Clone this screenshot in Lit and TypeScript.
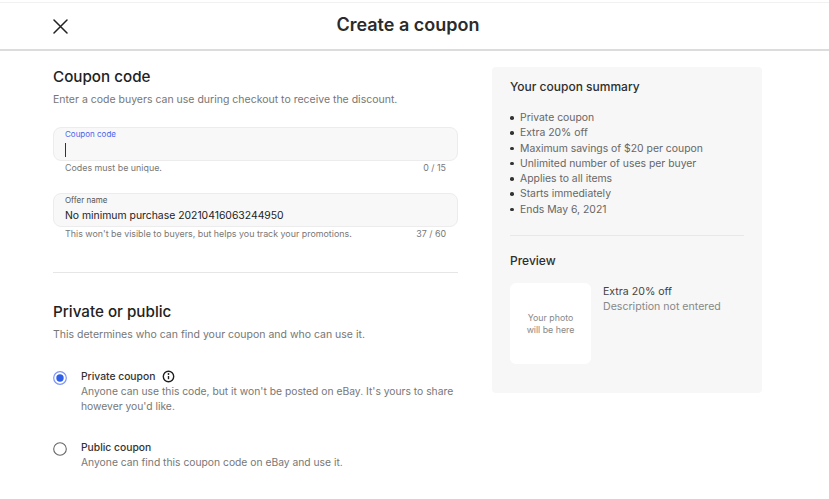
import { LitElement, html, css } from "lit";
import { customElement } from "lit/decorators.js";

@customElement("app-root")
export class AppRoot extends LitElement {
  static styles = css`
    :host { display: block; width: 829px; height: 499px; overflow: hidden; background: #fff; font-family: Inter, "Liberation Sans", sans-serif; color: #2b2b2b; }
    * { box-sizing: border-box; }
    .header { margin-top: 2px; border-top: 1px solid #f1f1f1; border-bottom: 2px solid #dcdcdc; display: flex; align-items: center; position: relative; padding: 0 53px; height: 49px; }
    .close { width: 15px; height: 15px; display: block; margin-top: 1px; }
    .title { position: absolute; left: 0; right: 13px; text-align: center; top: 10px; font-size: 18px; font-weight: 600; line-height: 24px; }
    .body { display: flex; padding: 16px 0 0 53px; gap: 34px; align-items: flex-start; }
    .left { width: 405px; flex: none; }
    h2 { margin: 0; font-size: 15.2px; font-weight: 500; line-height: 20px; color: #222; }
    .sub { margin: 6px 0 0; font-size: 10.5px; line-height: 14px; color: #767676; }
    .field { height: 34px; border: 1px solid #ececec; border-radius: 8px; background: #f8f8f8; padding: 1px 11px; display: flex; flex-direction: column; }
    .flabel { font-size: 8px; line-height: 11px; color: #555; }
    .flabel.active { color: #4a63f0; }
    .fvalue { font-size: 10.4px; line-height: 15px; margin-top: 2px; color: #222; height: 15px; display: flex; align-items: center; }
    .caret { width: 1px; height: 14px; background: #333; }
    .hint { display: flex; justify-content: space-between; padding: 1px 12px 0; font-size: 8.9px; line-height: 12px; color: #777; }
    .first { margin-top: 20px; }
    .second { margin-top: 19px; }
    hr { border: 0; height: 1px; background: #e6e6e6; margin: 32px 0 0; }
    .sec2 { margin-top: 29px; }
    .radios { margin-top: 27px; display: flex; flex-direction: column; gap: 26px; }
    .radio { display: flex; gap: 14px; }
    .dot { width: 14px; height: 14px; margin-top: 2px; flex: none; display: block; }
    .rt { display: flex; align-items: center; gap: 7px; font-size: 10.3px; font-weight: 500; line-height: 15px; color: #333; }
    .rd { font-size: 10.3px; line-height: 15px; color: #777; white-space: nowrap; }
    .info { width: 13px; height: 13px; display: block; }
    .card { width: 270px; flex: none; height: 326px; background: #f7f7f7; border-radius: 4px; padding: 12px 18px; }
    h3 { margin: 0; font-size: 12px; font-weight: 500; line-height: 16px; color: #2e2e2e; }
    ul { margin: 15px 0 0; padding: 0 0 0 10px; list-style: none; font-size: 10.4px; line-height: 15.3px; color: #666; }
    li { position: relative; }
    li::before { content: ""; position: absolute; left: -10px; top: 6px; width: 3.5px; height: 3.5px; border-radius: 50%; background: #333; }
    .card hr { margin: 18px 0 0; background: #e8e8e8; }
    .pv { margin-top: 17px; }
    .prow { display: flex; gap: 12px; margin-top: 14px; }
    .photo { width: 81px; height: 81px; background: #fff; border-radius: 6px; flex: none; display: flex; align-items: center; justify-content: center; text-align: center; font-size: 8.8px; line-height: 12px; color: #888; }
    .pt { font-size: 10.6px; line-height: 15px; color: #444; margin-top: 1px; }
    .pd { font-size: 10.6px; line-height: 15px; color: #888; }
  `;

  render() {
    return html`
      <div class="header">
        <svg class="close" viewBox="0 0 15 15" fill="none" stroke="#222" stroke-width="1.5" stroke-linecap="round"><path d="M1 1l13 13M14 1L1 14"/></svg>
        <div class="title">Create a coupon</div>
      </div>
      <div class="body">
        <div class="left">
          <h2>Coupon code</h2>
          <p class="sub">Enter a code buyers can use during checkout to receive the discount.</p>
          <div class="field first">
            <div class="flabel active">Coupon code</div>
            <div class="fvalue"><span class="caret"></span></div>
          </div>
          <div class="hint"><span>Codes must be unique.</span><span>0 / 15</span></div>
          <div class="field second">
            <div class="flabel">Offer name</div>
            <div class="fvalue">No minimum purchase 20210416063244950</div>
          </div>
          <div class="hint"><span>This won't be visible to buyers, but helps you track your promotions.</span><span>37 / 60</span></div>
          <hr />
          <h2 class="sec2">Private or public</h2>
          <p class="sub">This determines who can find your coupon and who can use it.</p>
          <div class="radios">
            <div class="radio">
              <svg class="dot" viewBox="0 0 14 14"><circle cx="7" cy="7" r="6.3" fill="#fff" stroke="#7f95f5" stroke-width="1.2"/><circle cx="7" cy="7" r="3.7" fill="#2f5fe8"/></svg>
              <div>
                <div class="rt">Private coupon
                  <svg class="info" viewBox="0 0 13 13" fill="none"><circle cx="6.5" cy="6.5" r="5.2" stroke="#1f1f1f" stroke-width="1.4"/><path d="M6.5 6v3.2" stroke="#1f1f1f" stroke-width="1.4"/><circle cx="6.5" cy="4" r=".9" fill="#1f1f1f"/></svg>
                </div>
                <div class="rd">Anyone can use this code, but it won't be posted on eBay. It's yours to share<br />however you'd like.</div>
              </div>
            </div>
            <div class="radio">
              <svg class="dot" viewBox="0 0 14 14"><circle cx="7" cy="7" r="6.3" fill="#fff" stroke="#666" stroke-width="1.1"/></svg>
              <div>
                <div class="rt">Public coupon</div>
                <div class="rd">Anyone can find this coupon code on eBay and use it.</div>
              </div>
            </div>
          </div>
        </div>
        <div class="card">
          <h3>Your coupon summary</h3>
          <ul>
            <li>Private coupon</li>
            <li>Extra 20% off</li>
            <li>Maximum savings of $20 per coupon</li>
            <li>Unlimited number of uses per buyer</li>
            <li>Applies to all items</li>
            <li>Starts immediately</li>
            <li>Ends May 6, 2021</li>
          </ul>
          <hr />
          <h3 class="pv">Preview</h3>
          <div class="prow">
            <div class="photo">Your photo<br />will be here</div>
            <div>
              <div class="pt">Extra 20% off</div>
              <div class="pd">Description not entered</div>
            </div>
          </div>
        </div>
      </div>
    `;
  }
}
